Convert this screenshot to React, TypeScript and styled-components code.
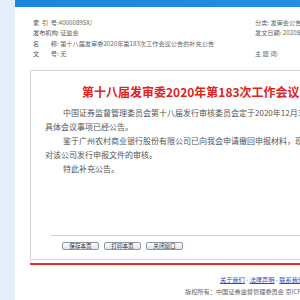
import styled, { createGlobalStyle } from "styled-components";

const GlobalStyle = createGlobalStyle`
  html, body {
    margin: 0;
    padding: 0;
    background: #ffffff;
    overflow: hidden;
  }
  body {
    font-family: "Noto Sans CJK SC", "Liberation Sans", sans-serif;
  }
`;

type InfoRow = { label: string; value: string; tight?: boolean };

const leftRows: InfoRow[] = [
  { label: "索引号", value: "40000895X/", tight: true },
  { label: "发布机构", value: "证监会" },
  { label: "名称", value: "第十八届发审委2020年第183次工作会议公告的补充公告" },
  { label: "文号", value: "无" },
];

const rightRows: string[] = ["分类: 发审会公告", "发文日期: 2020年12月30日", "", "主 题 词:"];

const paragraphs: string[][] = [
  [
    "中国证券监督管理委员会第十八届发行审核委员会定于2020年12月31日召开2020年第183次发行审核委员会工作会议，",
    "具体会议事项已经公告。",
  ],
  [
    "鉴于广州农村商业银行股份有限公司已向我会申请撤回申报材料，现决定取消第十八届发审委2020年第183次工作会议",
    "对该公司发行申报文件的审核。",
  ],
  ["特此补充公告。"],
];

export default function App() {
  return (
    <>
      <GlobalStyle />
      <Page>
        <SideStrip />
        <Main>
          <TopBar />
          <InfoGrid>
            {leftRows.map((row, i) => [
              <InfoCell key={"l" + i}>
                <Label>{row.label}</Label>:{row.tight ? "" : " "}
                {row.value}
              </InfoCell>,
              <InfoCell key={"r" + i}>{rightRows[i]}</InfoCell>,
            ])}
          </InfoGrid>

          <ArticleBox>
            <Title>第十八届发审委2020年第183次工作会议公告的补充公告</Title>
            <Body>
              {paragraphs.map((lines, i) => (
                <Paragraph key={i}>
                  {lines.map((line, j) => (
                    <Line key={j} $indent={j === 0}>
                      {line}
                    </Line>
                  ))}
                </Paragraph>
              ))}
            </Body>
            <Divider />
            <ButtonRow>
              <PageButton>保存本页</PageButton>
              <PageButton>打印本页</PageButton>
              <PageButton>关闭窗口</PageButton>
            </ButtonRow>
          </ArticleBox>
          <RedRule />

          <FooterLinks>
            <a>关于我们</a> - <a>法律声明</a> - <a>联系我们</a>
          </FooterLinks>
          <Copyright>版权所有：中国证券监督管理委员会 京ICP备 05035542号</Copyright>
        </Main>
      </Page>
    </>
  );
}

const Page = styled.div`
  display: flex;
  width: 900px;
  height: 300px;
`;

const SideStrip = styled.div`
  flex: none;
  width: 15px;
  background: #e4edf8;
`;

const Main = styled.div`
  flex: none;
  width: 885px;
  display: flex;
  flex-direction: column;
`;

const TopBar = styled.div`
  height: 7px;
  background: linear-gradient(90deg, #1c86dc, #3a9de8);
`;

const InfoGrid = styled.div`
  display: grid;
  grid-template-columns: 222px 1fr;
  grid-auto-rows: 10.5px;
  padding: 10.5px 0 0 18px;
  font-size: 6.2px;
  line-height: 10.5px;
  color: #666;
`;

const InfoCell = styled.div`
  white-space: nowrap;
`;

const Label = styled.span`
  display: inline-block;
  width: 24px;
  text-align: justify;
  text-align-last: justify;
  color: #555;
`;

const ArticleBox = styled.div`
  margin: 10.5px 0 0 15px;
  width: 820px;
  border: 1px solid #d4d4d4;
  padding: 13px 0 9px 0;
`;

const Title = styled.div`
  padding-left: 51px;
  font-size: 12px;
  line-height: 16px;
  font-weight: 700;
  color: #e0231b;
  white-space: nowrap;
`;

const Body = styled.div`
  padding: 6px 0 0 14px;
  font-size: 8px;
  line-height: 14px;
  color: #555;
`;

const Paragraph = styled.div``;

const Line = styled.div<{ $indent: boolean }>`
  white-space: nowrap;
  padding-left: ${(p) => (p.$indent ? "18px" : "0")};
`;

const Divider = styled.div`
  margin: 59px 0 0 20px;
  height: 1px;
  background: #d2d2d2;
`;

const ButtonRow = styled.div`
  display: flex;
  gap: 5px;
  margin-top: 6px;
  padding-left: 31px;
`;

const PageButton = styled.button`
  width: 37px;
  height: 8px;
  padding: 0;
  border: 1px solid #8c97a6;
  border-radius: 2px;
  background: linear-gradient(#ffffff, #dfe3ea);
  font-family: "Noto Sans CJK SC", sans-serif;
  font-size: 5.6px;
  line-height: 6px;
  color: #333;
`;

const RedRule = styled.div`
  margin: 3px 0 0 15px;
  width: 822px;
  height: 2px;
  background: #e0302a;
`;

const FooterLinks = styled.div`
  margin-top: 10px;
  padding-left: 205px;
  font-size: 6.2px;
  line-height: 10px;
  color: #777;
  white-space: nowrap;

  a {
    color: #1b4fc4;
    text-decoration: underline;
  }
`;

const Copyright = styled.div`
  margin-top: 2px;
  padding-left: 170px;
  font-size: 6.2px;
  line-height: 10px;
  color: #666;
  white-space: nowrap;
`;
